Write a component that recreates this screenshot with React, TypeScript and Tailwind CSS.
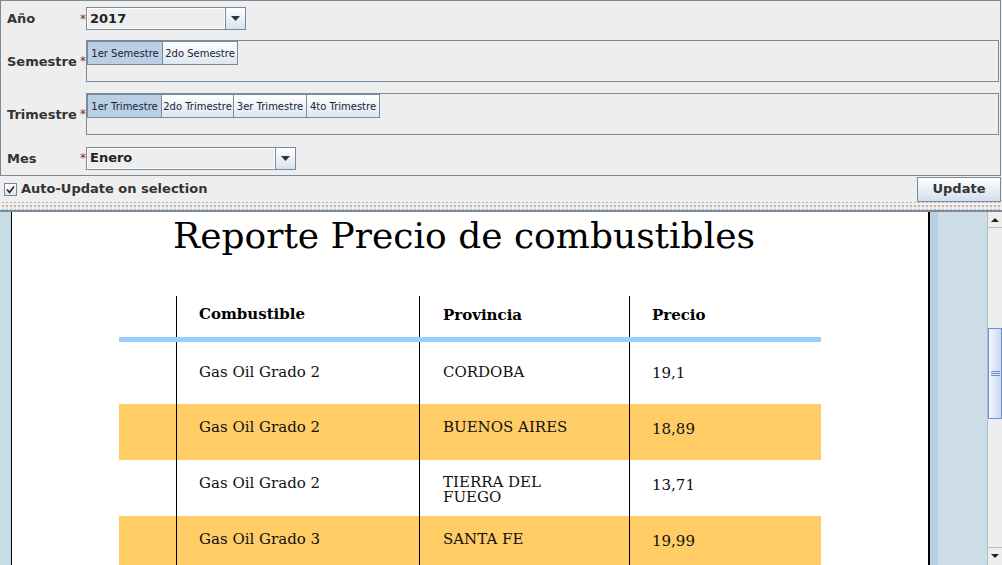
import React from "react";

const ui = { fontFamily: '"DejaVu Sans", sans-serif' };
const serif = { fontFamily: '"DejaVu Serif", serif' };

function Arrow() {
  return (
    <svg width="9" height="5" viewBox="0 0 9 5">
      <polygon points="0,0 9,0 4.5,5" fill="#333" />
    </svg>
  );
}

function Combo({ value, width }: { value: string; width: number }) {
  return (
    <div
      className="flex h-[23px] border border-[#7a8a99] bg-[#eeeeee]"
      style={{ width }}
    >
      <div className="flex-1 flex items-center pl-[2px] text-[13px] font-bold text-[#222] border border-white">
        {value}
      </div>
      <div className="w-[20px] flex items-center justify-center border-l border-[#7a8a99] bg-gradient-to-b from-white to-[#d8e3ee]">
        <Arrow />
      </div>
    </div>
  );
}

function Toggle({ label, selected, w }: { label: string; selected?: boolean; w: number }) {
  return (
    <div
      className={
        "h-[24px] flex items-center justify-center text-[10px] text-[#223] border border-[#7a8a99] -ml-px first:ml-0 " +
        (selected ? "bg-[#b8cfe5]" : "bg-gradient-to-b from-white to-[#dce7f2]")
      }
      style={{ width: w }}
    >
      {label}
    </div>
  );
}

function Label({ text }: { text: string }) {
  return (
    <div className="w-[79px] pl-[6px] pt-[1px] text-[13px] font-bold text-[#333]">{text}</div>
  );
}

function Star() {
  return <div className="w-[6px] text-[12px] text-[#7a3030] leading-none">*</div>;
}

const rows = [
  { c: "Gas Oil Grado 2", p: ["CORDOBA"], v: "19,1", bg: "bg-white", h: 62, pt: 21, vt: 22 },
  { c: "Gas Oil Grado 2", p: ["BUENOS AIRES"], v: "18,89", bg: "bg-[#ffcc66]", h: 56, pt: 14, vt: 16 },
  { c: "Gas Oil Grado 2", p: ["TIERRA DEL", "FUEGO"], v: "13,71", bg: "bg-white", h: 56, pt: 14, vt: 16 },
  { c: "Gas Oil Grado 3", p: ["SANTA FE"], v: "19,99", bg: "bg-[#ffcc66]", h: 56, pt: 14, vt: 16 },
];

export default function App() {
  return (
    <div className="w-[1002px] h-[565px] overflow-hidden bg-[#eeeeee] flex flex-col" style={ui}>
      {/* Form panel */}
      <div className="h-[176px] w-[1001px] border border-[#7a8a99] flex flex-col">
        <div className="flex items-center mt-[6px] h-[23px]">
          <Label text="Año" />
          <Star />
          <Combo value="2017" width={160} />
        </div>
        <div className="flex items-center mt-[10px] h-[42px]">
          <Label text="Semestre" />
          <Star />
          <div className="flex-1 h-[42px] border border-[#7a8a99] mr-[1px]">
            <div className="flex">
              <Toggle label="1er Semestre" selected w={76} />
              <Toggle label="2do Semestre" w={76} />
            </div>
          </div>
        </div>
        <div className="flex items-center mt-[11px] h-[42px]">
          <Label text="Trimestre" />
          <Star />
          <div className="flex-1 h-[42px] border border-[#7a8a99] mr-[1px]">
            <div className="flex">
              <Toggle label="1er Trimestre" selected w={75} />
              <Toggle label="2do Trimestre" w={73} />
              <Toggle label="3er Trimestre" w={74} />
              <Toggle label="4to Trimestre" w={74} />
            </div>
          </div>
        </div>
        <div className="flex items-center mt-[11px] h-[24px]">
          <Label text="Mes" />
          <Star />
          <Combo value="Enero" width={210} />
        </div>
      </div>

      {/* Checkbox row */}
      <div className="h-[26px] flex items-center justify-between">
        <div className="flex items-center pl-[4px]">
          <div className="w-[13px] h-[13px] border border-[#7a8a99] bg-gradient-to-b from-white to-[#dde7f1] flex items-center justify-center">
            <svg width="9" height="9" viewBox="0 0 9 9">
              <path d="M1 4.5 L3.5 7.5 L8 1.5" stroke="#222" strokeWidth="1.6" fill="none" />
            </svg>
          </div>
          <span className="ml-[4px] text-[13px] font-bold text-[#333]">Auto-Update on selection</span>
        </div>
        <div className="w-[84px] h-[25px] mr-[1px] border border-[#7a8a99] bg-gradient-to-b from-white to-[#d3dfeb] flex items-center justify-center text-[13px] font-bold text-[#333]">
          Update
        </div>
      </div>

      {/* Splitter */}
      <div
        className="h-[8px]"
        style={{
          backgroundImage: "radial-gradient(circle, #b0b0b0 0.7px, transparent 0.8px)",
          backgroundSize: "4px 4px",
          backgroundPosition: "1px 2px",
        }}
      />

      {/* Report area */}
      <div className="flex-1 flex border-t-2 border-[#7a8a99] min-h-0">
        <div className="w-[11px] bg-[#c8dce8]" />
        <div className="w-[1px] bg-black" />
        <div className="w-[916px] bg-white overflow-hidden" style={serif}>
          <div className="text-center text-[36px] text-black leading-none pt-[6px] pr-[12px]">
            Reporte Precio de combustibles
          </div>
          <div className="ml-[107px] w-[702px] mt-[42px]">
            {/* header */}
            <div className="flex h-[41px] text-[15px] font-bold text-black">
              <div className="w-[57px]" />
              <div className="w-[243px] border-l border-black pl-[22px] pt-[7px]">Combustible</div>
              <div className="w-[210px] border-l border-black pl-[23px] pt-[8px]">Provincia</div>
              <div className="flex-1 border-l border-black pl-[22px] pt-[8px]">Precio</div>
            </div>
            <div className="h-[5px] bg-[#99ccff]" />
            {rows.map((r, i) => (
              <div key={i} className={"flex text-[15px] text-[#111] " + r.bg} style={{ height: r.h }}>
                <div className="w-[57px]" />
                <div className="w-[243px] border-l border-black pl-[22px] leading-[18px]" style={{ paddingTop: r.pt }}>
                  {r.c}
                </div>
                <div className="w-[210px] border-l border-black pl-[23px]" style={{ paddingTop: r.pt }}>
                  {r.p.length > 1 ? (
                    <div className="pt-[1px] leading-[15px]">
                      {r.p.map((t) => (
                        <div key={t}>{t}</div>
                      ))}
                    </div>
                  ) : (
                    <div className="leading-[18px]">{r.p[0]}</div>
                  )}
                </div>
                <div className="flex-1 border-l border-black pl-[22px] leading-[18px]" style={{ paddingTop: r.vt }}>
                  {r.v}
                </div>
              </div>
            ))}
          </div>
        </div>
        <div className="w-[2px] bg-black" />
        <div className="w-[8px] bg-[#b8cfe5]" />
        <div className="w-[49px] bg-[#ccdde8]" />
        {/* scrollbar */}
        <div className="w-[15px] flex flex-col bg-[#eeeeee] border-l border-[#b0bcc8]">
          <div className="h-[16px] flex items-center justify-center border-b border-[#b0bcc8]">
            <svg width="8" height="4" viewBox="0 0 8 4"><polygon points="0,4 8,4 4,0" fill="#222" /></svg>
          </div>
          <div className="h-[100px]" />
          <div className="h-[91px] border border-[#6b8fd4] bg-gradient-to-r from-[#f4f8fd] to-[#c9d9ef] flex flex-col items-center justify-center gap-[1px]">
            <div className="w-[9px] h-[1px] bg-[#6b8fd4]" />
            <div className="w-[9px] h-[1px] bg-[#6b8fd4]" />
            <div className="w-[9px] h-[1px] bg-[#6b8fd4]" />
          </div>
          <div className="flex-1" />
          <div className="h-[16px] flex items-center justify-center border-t border-[#b0bcc8] mb-[2px]">
            <svg width="8" height="4" viewBox="0 0 8 4"><polygon points="0,0 8,0 4,4" fill="#222" /></svg>
          </div>
        </div>
      </div>
    </div>
  );
}
